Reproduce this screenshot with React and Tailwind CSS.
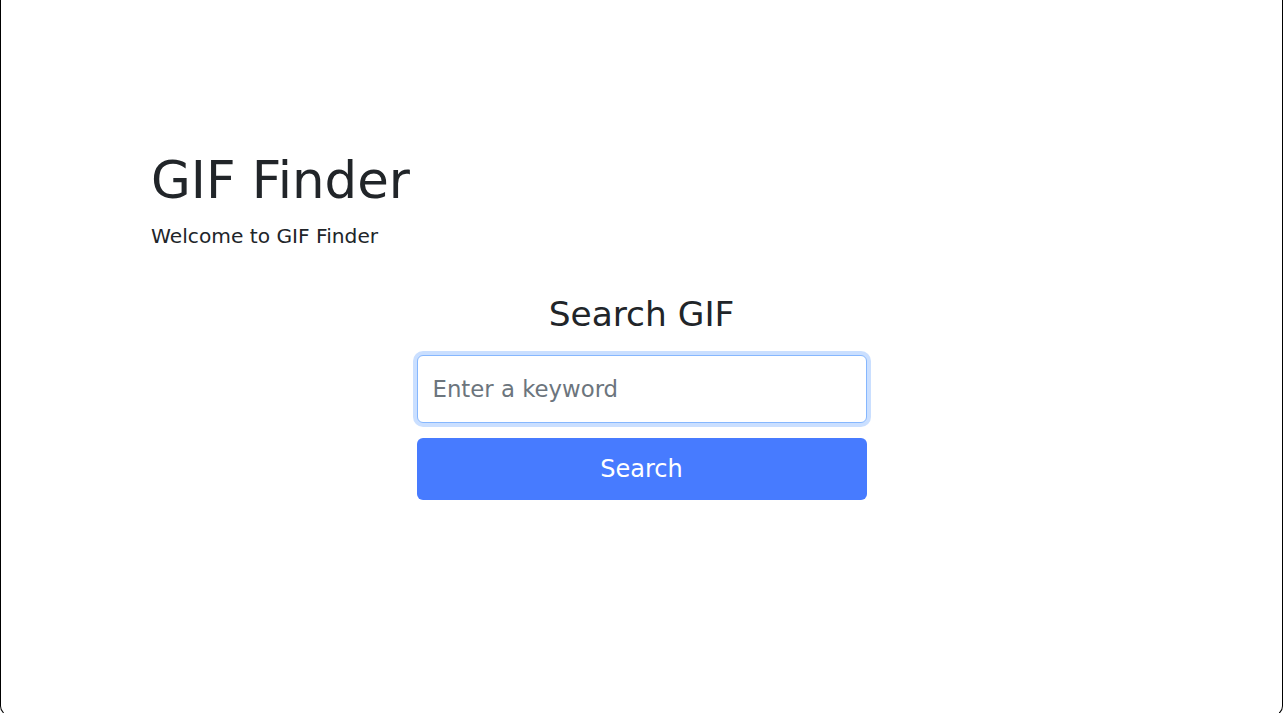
export default function App() {
  return (
    <div className="h-[716px] w-full bg-white border-x border-b border-black rounded-b-[10px] text-[#212529] font-['DejaVu_Sans',sans-serif] overflow-hidden">
      <div className="pl-[150px] pt-[150px]">
        <h1 className="text-[51.4px] leading-[1.2] font-normal">GIF Finder</h1>
        <p className="mt-[9px] text-[20.2px] leading-[30px]">Welcome to GIF Finder</p>
      </div>
      <div className="mt-[43px] flex flex-col items-center">
        <h3 className="text-[34.4px] leading-[40px] font-normal">Search GIF</h3>
        <div className="mt-[21px] w-[450px] flex flex-col gap-[15px]">
          <input
            type="text"
            placeholder="Enter a keyword"
            className="h-[68px] w-full rounded-[6px] border border-[#86b7fe] bg-white px-[15px] text-[22.8px] text-[#212529] placeholder:text-[#6c757d] shadow-[0_0_0_4px_rgba(13,110,253,0.22)] outline-none"
          />
          <button className="h-[62px] w-full rounded-[6px] bg-[#477bff] text-white text-[24px]">
            Search
          </button>
        </div>
      </div>
    </div>
  );
}
